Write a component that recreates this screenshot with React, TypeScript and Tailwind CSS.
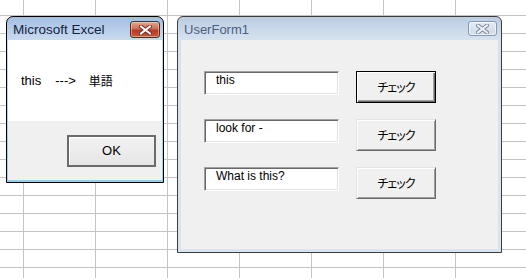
import React from "react";

function CloseX({ outline, fill }: { outline: string; fill: string }) {
  return (
    <svg width="13" height="10" viewBox="0 0 13 10">
      <path d="M2 1.5 L11 8.5 M11 1.5 L2 8.5" stroke={outline} strokeWidth="4" strokeLinecap="square" fill="none" />
      <path d="M2 1.5 L11 8.5 M11 1.5 L2 8.5" stroke={fill} strokeWidth="2" strokeLinecap="square" fill="none" />
    </svg>
  );
}

function MsgBox() {
  return (
    <div className="absolute left-[6px] top-[16px] w-[158px] h-[167px] flex flex-col border border-black rounded-t-[7px] bg-[linear-gradient(to_bottom,#a4bee2,#c9dbf0_23px,#bcd6ec_40px,#8fd3ea)] px-[1px] pb-[2px] font-['Liberation_Sans','Noto_Sans_CJK_JP',sans-serif]">
      <div className="h-[23px] flex items-start justify-between pl-[5px] pr-[2px]">
        <span className="text-[13.5px] leading-[13px] mt-[6px] text-[#14233c]">Microsoft Excel</span>
        <div className="mt-[4px] w-[30px] h-[17px] rounded-[3px] border border-[#6a2418] bg-[linear-gradient(to_bottom,#e6a793,#cf6d55_45%,#b83a22_55%,#c8583c)] shadow-[inset_0_0_0_1px_rgba(255,220,200,0.5)] flex items-center justify-center">
          <CloseX outline="#7a2a1c" fill="#ffffff" />
        </div>
      </div>
      <div className="flex-1 flex flex-col">
        <div className="h-[81px] bg-white flex items-center pl-[13px] text-[13px] text-black whitespace-pre">
          <span>this</span>
          <span className="ml-[14px]">---&gt;</span>
          <span className="ml-[13px] font-['Noto_Sans_CJK_JP',sans-serif] text-[12px]">単語</span>
        </div>
        <div className="flex-1 bg-[#f0f0f0] flex justify-end items-start pt-[14px] pr-[6px]">
          <div className="w-[89px] h-[32px] border-2 border-[#6b6b6b] bg-[linear-gradient(to_bottom,#f2f2f2,#e6e6e6)] shadow-[inset_1px_1px_0_#ffffff] flex items-center justify-center text-[13px] text-black">
            OK
          </div>
        </div>
      </div>
    </div>
  );
}

function TextBox({ text }: { text: string }) {
  return (
    <div className="w-[135px] h-[24px] bg-white border border-t-[#a0a0a0] border-l-[#a0a0a0] border-r-white border-b-white shadow-[inset_1px_1px_0_#696969,inset_-1px_-1px_0_#e3e3e3] pl-[11px] pt-[1px] text-[12px] leading-[14px] text-black whitespace-pre">
      {text}
    </div>
  );
}

function Btn({ def }: { def?: boolean }) {
  const cls = def
    ? "border border-black shadow-[inset_1px_1px_0_#ffffff,inset_-1px_-1px_0_#696969,inset_-2px_-2px_0_#a0a0a0]"
    : "border border-t-[#e3e3e3] border-l-[#e3e3e3] border-r-[#696969] border-b-[#696969] shadow-[inset_1px_1px_0_#ffffff,inset_-1px_-1px_0_#a0a0a0]";
  return (
    <div className={"ml-[17px] w-[80px] h-[32px] bg-[#f0f0f0] flex items-center justify-center " + cls}>
      <span className="font-['Noto_Sans_CJK_JP',sans-serif] [font-feature-settings:'palt'] text-[12px] tracking-[-1px] text-black">チェック</span>
    </div>
  );
}

function UserForm() {
  return (
    <div className="absolute left-[177px] top-[16px] w-[325px] h-[237px] flex flex-col border border-[#3c3c3c] rounded-t-[6px] bg-[linear-gradient(to_bottom,#bccde2,#d6e2ef_23px,#d9e4f1)] px-[3px] pb-[3px] font-['Liberation_Sans','Noto_Sans_CJK_JP',sans-serif]">
      <div className="h-[23px] flex items-start justify-between pl-[3px] pr-[1px]">
        <span className="text-[13px] leading-[13px] mt-[6px] text-[#4b5e80]">UserForm1</span>
        <div className="mt-[4px] w-[29px] h-[15px] rounded-[3px] border border-[#8798b6] bg-[linear-gradient(to_bottom,#e4ebf4,#cfdbe9)] shadow-[inset_0_0_0_1px_rgba(255,255,255,0.6)] flex items-center justify-center">
          <CloseX outline="#7d8797" fill="#eef1f5" />
        </div>
      </div>
      <div className="flex-1 bg-[#f0f0f0] flex flex-col gap-[16px] pt-[31px] pl-[23px]">
        <div className="flex items-start">
          <TextBox text="this" />
          <Btn def />
        </div>
        <div className="flex items-start">
          <TextBox text="look for -" />
          <Btn />
        </div>
        <div className="flex items-start">
          <TextBox text="What is this?" />
          <Btn />
        </div>
      </div>
    </div>
  );
}

export default function App() {
  return (
    <div className="relative w-[526px] h-[278px] overflow-hidden bg-white bg-[linear-gradient(to_right,#c4c4c4_1px,transparent_1px),linear-gradient(to_bottom,#c4c4c4_1px,transparent_1px)] bg-[size:72px_18px] bg-[position:23px_15px]">
      <MsgBox />
      <UserForm />
    </div>
  );
}
